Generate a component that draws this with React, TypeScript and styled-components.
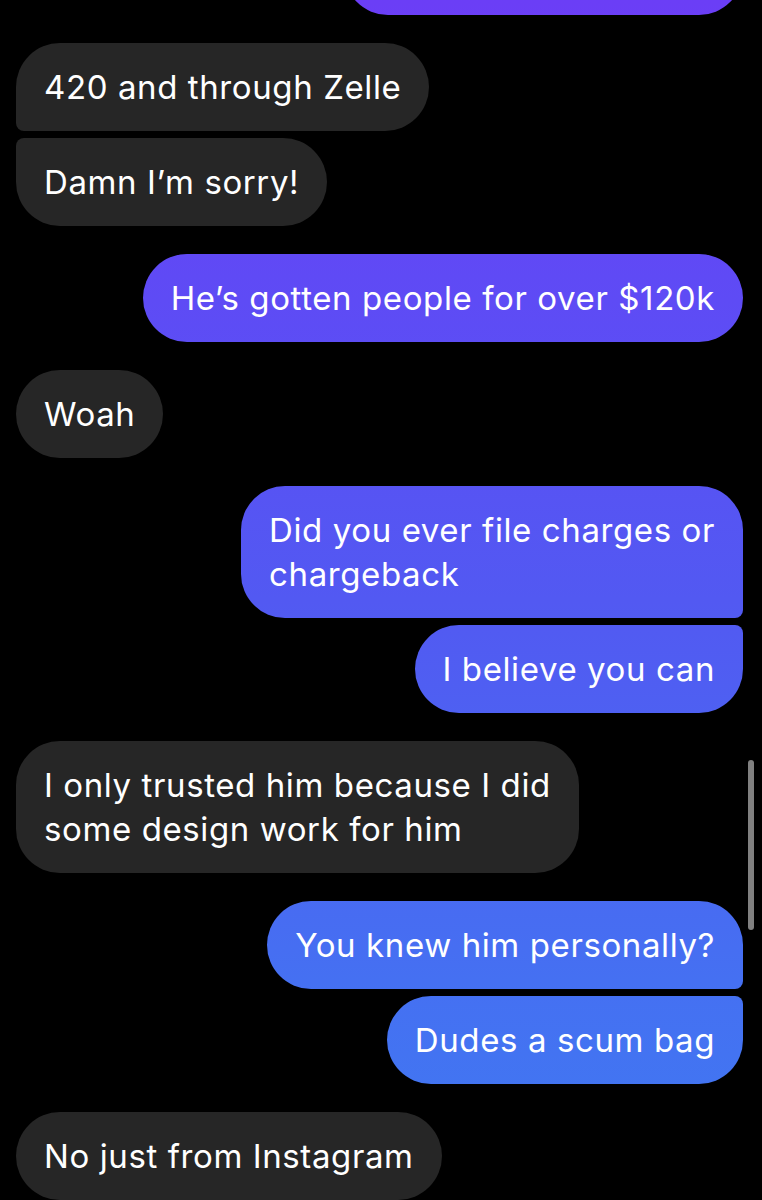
import React from 'react'
import styled, { createGlobalStyle, css } from 'styled-components'

type Position = 'single' | 'first' | 'last'

interface IMessage {
    id: number
    sent: boolean
    text: string
    position: Position
}

const messages: IMessage[] = [
    { id: 0, sent: true, text: '', position: 'single' },
    { id: 1, sent: false, text: '420 and through Zelle', position: 'first' },
    { id: 2, sent: false, text: 'Damn I’m sorry!', position: 'last' },
    { id: 3, sent: true, text: 'He’s gotten people for over $120k', position: 'single' },
    { id: 4, sent: false, text: 'Woah', position: 'single' },
    { id: 5, sent: true, text: 'Did you ever file charges or\nchargeback', position: 'first' },
    { id: 6, sent: true, text: 'I believe you can', position: 'last' },
    { id: 7, sent: false, text: 'I only trusted him because I did\nsome design work for him', position: 'single' },
    { id: 8, sent: true, text: 'You knew him personally?', position: 'first' },
    { id: 9, sent: true, text: 'Dudes a scum bag', position: 'last' },
    { id: 10, sent: false, text: 'No just from Instagram', position: 'single' }
]

const GlobalStyle = createGlobalStyle`
    html,
    body {
        margin: 0;
        padding: 0;
        background: #000;
        overflow: hidden;
    }
`

const App = function (): JSX.Element {
    return (
        <StyledChat>
            <GlobalStyle />
            <Thread>
                {messages.map(message => (
                    <Bubble
                        key={message.id}
                        $sent={message.sent}
                        $position={message.position}
                        $grouped={message.position === 'last'}
                        $placeholder={message.text === ''}
                    >
                        {message.text}
                    </Bubble>
                ))}
            </Thread>
            <ScrollIndicator />
        </StyledChat>
    )
}

export default App

const StyledChat = styled.div`
    position: relative;
    width: 762px;
    height: 1200px;
    overflow: hidden;
    background: #000;
    font-family: Inter, 'Liberation Sans', sans-serif;
`

const Thread = styled.div`
    display: flex;
    flex-direction: column;
    padding: 0 19px 0 16px;
    margin-top: -73px;
`

const sentCorners = {
    single: css`
        border-radius: 44px;
    `,
    first: css`
        border-radius: 44px 44px 8px 44px;
    `,
    last: css`
        border-radius: 44px 8px 44px 44px;
    `
}

const receivedCorners = {
    single: css`
        border-radius: 44px;
    `,
    first: css`
        border-radius: 44px 44px 44px 8px;
    `,
    last: css`
        border-radius: 8px 44px 44px 44px;
    `
}

const Bubble = styled.div<{ $sent: boolean; $position: Position; $grouped: boolean; $placeholder: boolean }>`
    box-sizing: border-box;
    align-self: ${({ $sent }) => ($sent ? 'flex-end' : 'flex-start')};
    margin-top: ${({ $grouped }) => ($grouped ? '7px' : '28px')};
    padding: 22px 28px;
    min-height: 88px;
    width: ${({ $placeholder }) => ($placeholder ? '399px' : 'auto')};
    white-space: pre-line;
    color: #fff;
    font-size: 33px;
    line-height: 44px;
    letter-spacing: 0.6px;
    ${({ $sent }) =>
        $sent
            ? css`
                  background: linear-gradient(180deg, #6b3ef6 0px, #5e4bf5 300px, #5259f2 600px, #4570f2 980px, #3f79f1 1200px);
                  background-attachment: fixed;
              `
            : css`
                  background: #262626;
              `}
    ${({ $sent, $position }) => ($sent ? sentCorners[$position] : receivedCorners[$position])}

    &:first-child {
        margin-top: 0;
    }
`

const ScrollIndicator = styled.div`
    position: absolute;
    top: 760px;
    right: 8px;
    width: 6px;
    height: 170px;
    border-radius: 3px;
    background: #808080;
`
